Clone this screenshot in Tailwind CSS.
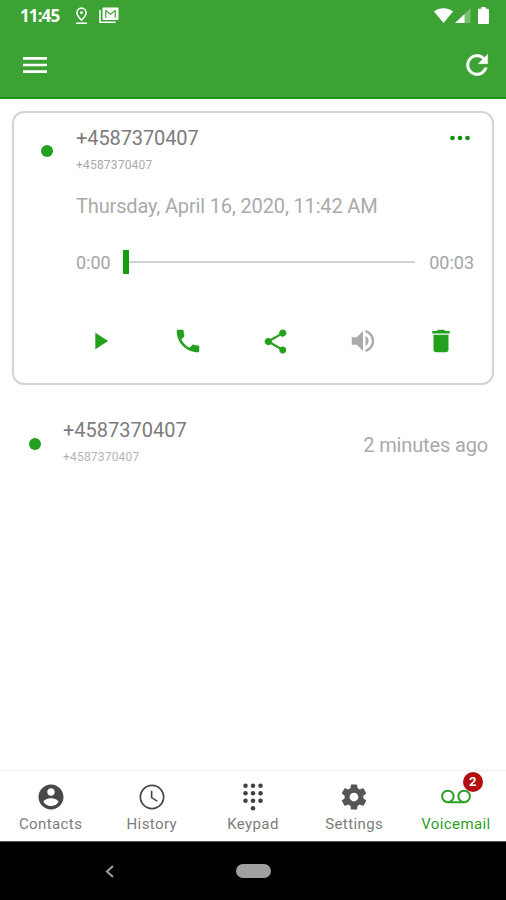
<!DOCTYPE html>
<html lang="en">
<head>
  <meta charset="UTF-8" />
  <meta name="viewport" content="width=device-width, initial-scale=1.0"/>
  <title>Voicemail</title>
  <script src="https://cdn.jsdelivr.net/npm/@tailwindcss/browser@4"></script>
</head>
<body class="bg-white font-['Roboto',sans-serif]">

  <div class="w-[506px] h-[900px] flex flex-col overflow-hidden">

    <!-- Header -->
    <header class="h-[99px] shrink-0 bg-[#3ba233] border-b-2 border-[#169612] text-white">
      <div class="h-[31px] flex items-center pl-5 pr-[17px]">
        <span class="w-[55px] text-[17px] leading-5 font-['Open_Sans',sans-serif] font-bold tracking-[-0.9px] whitespace-nowrap">11:45</span>
        <svg class="w-[13px] h-[18px]" viewBox="0 0 13 18" fill="none" stroke="currentColor" stroke-width="1.6">
          <path d="M6.5 13.2C3.6 10.2 1.9 8.2 1.9 5.7a4.6 4.6 0 0 1 9.2 0c0 2.5-1.7 4.5-4.6 7.5z"/>
          <circle cx="6.5" cy="5.7" r="1.4" fill="currentColor" stroke="none"/>
          <path d="M1 16.2h11"/>
        </svg>
        <svg class="w-5 h-[17px] ml-[11px]" viewBox="0 0 20 17">
          <path fill="none" stroke="currentColor" stroke-width="1.6" d="M1 3v12.2h15.5"/>
          <rect x="3.500" y="0.500" width="16" height="12.500" rx="1" fill="currentColor"/>
          <path fill="none" stroke="#3ba233" stroke-width="1.200" d="M6.800 10.800V3.600l4.700 3.600 4.700-3.600v7.200"/>
        </svg>
        <div class="ml-auto flex items-center">
          <svg class="w-[19px] h-[15px]" viewBox="0 0 19 15" fill="currentColor"><path d="M0 3.500C5.500-.8 13.500-.8 19 3.500L9.500 15z"/></svg>
          <svg class="w-[16px] h-[15px] ml-[2px]" viewBox="0 0 16 15" fill="currentColor"><path opacity=".3" d="M9 6.500L15.500 0v15H9z"/><path d="M0 15L9.500 6v9z"/></svg>
          <svg class="w-[11px] h-[17px] ml-[7px]" viewBox="0 0 11 17" fill="currentColor"><path d="M3.300 0h4.400v1.800H10q1 0 1 1V16q0 1-1 1H1q-1 0-1-1V2.800q0-1 1-1h2.300z"/></svg>
        </div>
      </div>
      <div class="h-[67px] flex items-center justify-between pl-[19px] pr-[13px]">
        <svg class="w-8 h-8" viewBox="0 0 24 24" fill="currentColor"><path d="M3 18h18v-2H3v2zm0-5h18v-2H3v2zm0-7v2h18V6H3z"/></svg>
        <svg class="w-8 h-8" viewBox="0 0 24 24" fill="currentColor" stroke="currentColor" stroke-width=".3"><path d="M17.650 6.350A7.958 7.958 0 0 0 12 4a8 8 0 1 0 7.730 10h-2.080A6 6 0 1 1 12 6c1.660 0 3.140.690 4.220 1.780L13 11h7V4z"/></svg>
      </div>
    </header>

    <!-- Voicemail list -->
    <main class="flex-1 min-h-0">
      <section class="mx-3 mt-3 h-[274px] border-2 border-[#d3d3d3] rounded-[12px] pl-[27px] pr-[18px] flex flex-col">
        <div class="flex h-[75px]">
          <div class="mt-[32px] size-3 rounded-full bg-[#23a01e] shrink-0"></div>
          <div class="ml-[23px] mt-[13px]">
            <p class="text-[20px] leading-6 tracking-[-0.1px] text-[#7c7c7c]">+4587370407</p>
            <p class="mt-[7px] text-[12px] leading-4 tracking-[0.2px] text-[#aaa]">+4587370407</p>
          </div>
          <svg class="ml-auto mr-[4px] mt-[22px] w-5 h-[6px]" viewBox="0 0 20 6" fill="#128e10">
            <circle cx="2.500" cy="3" r="2.300"/><circle cx="10" cy="3" r="2.300"/><circle cx="17.500" cy="3" r="2.300"/>
          </svg>
        </div>
        <p class="pl-[35px] mt-[6px] text-[20px] leading-6 tracking-[-0.15px] text-[#aaa] whitespace-nowrap">Thursday, April 16, 2020, 11:42 AM</p>
        <div class="mt-8 pl-[35px] h-6 flex items-center text-[18px] text-[#a5a5a5]">
          <span class="w-[47px]">0:00</span>
          <span class="w-[6px] h-6 bg-[#159d12]"></span>
          <span class="flex-1 h-[2px] bg-[#d3d3d3]"></span>
          <span class="w-[59px] text-right">00:03</span>
        </div>
        <div class="mt-[52px] pl-[45px] h-[30px] flex items-center text-[#23a01e]">
          <svg class="size-7" viewBox="0 0 24 24" fill="currentColor"><path d="M8 5v14l11-7z"/></svg>
          <svg class="size-[30px] ml-[59px]" viewBox="0 0 24 24" fill="currentColor"><path d="M6.620 10.790c1.440 2.830 3.760 5.140 6.590 6.590l2.200-2.200c.270-.270.670-.360 1.020-.240 1.120.370 2.330.570 3.570.570.550 0 1 .450 1 1V20c0 .550-.450 1-1 1-9.390 0-17-7.610-17-17 0-.550.450-1 1-1h3.500c.550 0 1 .450 1 1 0 1.250.200 2.450.570 3.570.110.350.030.740-.250 1.020l-2.200 2.200z"/></svg>
          <svg class="size-[29px] ml-[58px]" viewBox="0 0 24 24" fill="currentColor"><path d="M18 16.080c-.760 0-1.440.300-1.960.770L8.910 12.700c.050-.230.090-.460.090-.700s-.040-.470-.090-.700l7.050-4.110c.540.500 1.250.810 2.040.810 1.660 0 3-1.340 3-3s-1.340-3-3-3-3 1.340-3 3c0 .240.040.470.090.700L8.040 9.810C7.500 9.310 6.790 9 6 9c-1.660 0-3 1.340-3 3s1.340 3 3 3c.790 0 1.500-.310 2.040-.810l7.120 4.160c-.050.210-.080.430-.080.650 0 1.610 1.310 2.920 2.920 2.920s2.920-1.310 2.920-2.920-1.310-2.920-2.920-2.920z"/></svg>
          <svg class="size-[30px] ml-[58px] text-[#aaa]" viewBox="0 0 24 24" fill="currentColor"><path d="M3 9v6h4l5 5V4L7 9H3zm13.500 3c0-1.770-1.020-3.290-2.500-4.030v8.050c1.480-.730 2.500-2.250 2.500-4.020zM14 3.230v2.060c2.890.860 5 3.540 5 6.710s-2.110 5.850-5 6.710v2.060c4.010-.910 7-4.490 7-8.770s-2.990-7.860-7-8.770z"/></svg>
          <svg class="size-[30px] ml-[48px]" viewBox="0 0 24 24" fill="currentColor"><path d="M6 19c0 1.100.900 2 2 2h8c1.100 0 2-.900 2-2V7H6v12zM19 4h-3.500l-1-1h-5l-1 1H5v2h14V4z"/></svg>
        </div>
      </section>

      <section class="mt-[33px] flex pl-[29px] pr-[18px] h-12">
        <div class="mt-[20px] size-3 rounded-full bg-[#23a01e] shrink-0"></div>
        <div class="ml-[22px]">
          <p class="text-[20px] leading-6 text-[#7c7c7c]">+4587370407</p>
          <p class="mt-[7px] text-[12px] leading-4 tracking-[0.2px] text-[#b5b5b5]">+4587370407</p>
        </div>
        <p class="ml-auto mt-[15px] text-[20px] leading-6 tracking-[-0.15px] text-[#aaa]">2 minutes ago</p>
      </section>
    </main>

    <!-- Tab bar -->
    <nav class="h-[71px] shrink-0 border-t border-[#f0f0f0] grid grid-cols-5 text-[15px] leading-5 tracking-[0.4px] text-[#7c7c7c]">
      <div class="flex flex-col items-center pt-[11px]">
        <svg class="size-[30px]" viewBox="0 0 24 24" fill="#484848"><path d="M12 2C6.480 2 2 6.480 2 12s4.480 10 10 10 10-4.480 10-10S17.520 2 12 2zm0 3c1.660 0 3 1.340 3 3s-1.340 3-3 3-3-1.340-3-3 1.340-3 3-3zm0 14.200c-2.500 0-4.710-1.280-6-3.220.030-1.990 4-3.080 6-3.080 1.990 0 5.970 1.090 6 3.080-1.290 1.940-3.500 3.220-6 3.220z"/></svg>
        <span class="mt-[2px]">Contacts</span>
      </div>
      <div class="flex flex-col items-center pt-[11px]">
        <svg class="size-[30px]" viewBox="0 0 24 24" fill="none" stroke="#484848"><circle cx="12" cy="12" r="9.300" stroke-width="1.400"/><path stroke-width="1.300" d="M11.700 7v5.500l4.500 2.800"/></svg>
        <span class="mt-[2px]">History</span>
      </div>
      <div class="flex flex-col items-center pt-[11px]">
        <svg class="size-[30px]" viewBox="0 0 24 24" fill="#404040">
          <circle cx="6" cy="3" r="1.800"/><circle cx="12" cy="3" r="1.800"/><circle cx="18" cy="3" r="1.800"/>
          <circle cx="6" cy="9" r="1.800"/><circle cx="12" cy="9" r="1.800"/><circle cx="18" cy="9" r="1.800"/>
          <circle cx="6" cy="15" r="1.800"/><circle cx="12" cy="15" r="1.800"/><circle cx="18" cy="15" r="1.800"/>
          <circle cx="12" cy="21" r="1.800"/>
        </svg>
        <span class="mt-[2px]">Keypad</span>
      </div>
      <div class="flex flex-col items-center pt-[11px]">
        <svg class="size-[30px]" viewBox="0 0 24 24" fill="#555"><path d="M19.430 12.980c.040-.320.070-.640.070-.980s-.030-.660-.070-.980l2.110-1.650c.190-.150.240-.420.120-.640l-2-3.460c-.120-.220-.390-.300-.610-.220l-2.490 1c-.520-.400-1.080-.730-1.690-.980l-.380-2.650C14.460 2.180 14.250 2 14 2h-4c-.250 0-.460.180-.490.420l-.380 2.650c-.610.250-1.170.590-1.690.980l-2.490-1c-.230-.090-.490 0-.610.220l-2 3.460c-.130.220-.070.490.120.640l2.110 1.650c-.040.320-.070.650-.070.980s.030.660.070.980l-2.110 1.650c-.190.150-.240.420-.120.640l2 3.460c.120.220.390.300.610.220l2.490-1c.520.400 1.080.730 1.690.980l.380 2.650c.030.240.240.420.490.420h4c.250 0 .460-.180.490-.420l.380-2.650c.610-.250 1.170-.590 1.690-.980l2.490 1c.230.090.490 0 .610-.220l2-3.460c.120-.220.070-.490-.120-.640l-2.110-1.650zM12 15.500c-1.930 0-3.500-1.570-3.500-3.500s1.570-3.500 3.500-3.500 3.500 1.570 3.500 3.500-1.570 3.500-3.500 3.500z"/></svg>
        <span class="mt-[2px]">Settings</span>
      </div>
      <div class="relative flex flex-col items-center pt-[11px] pl-[1px] text-[#2ba026]">
        <svg class="size-[30px]" viewBox="0 0 24 24" fill="none" stroke="currentColor" stroke-width="1.600"><circle cx="5.500" cy="11.500" r="4.600"/><circle cx="18.500" cy="11.500" r="4.600"/><path d="M5.500 16.200h13"/></svg>
        <span class="mt-[2px]">Voicemail</span>
        <span class="absolute left-[58px] top-[1px] size-5 rounded-full bg-[#b30d12] text-white text-[13px] leading-5 font-bold tracking-normal text-center">2</span>
      </div>
    </nav>

    <!-- System navigation -->
    <footer class="h-[59px] shrink-0 bg-black border-t border-[#555] flex items-center pl-[105px]">
      <svg class="w-[9px] h-[13px]" viewBox="0 0 9 13" fill="none" stroke="#999" stroke-width="2.200"><path d="M8 1L2 6.500 8 12"/></svg>
      <div class="ml-[122px] w-[35px] h-[14px] rounded-full bg-[#a0a0a0]"></div>
    </footer>
  </div>

</body>
</html>
